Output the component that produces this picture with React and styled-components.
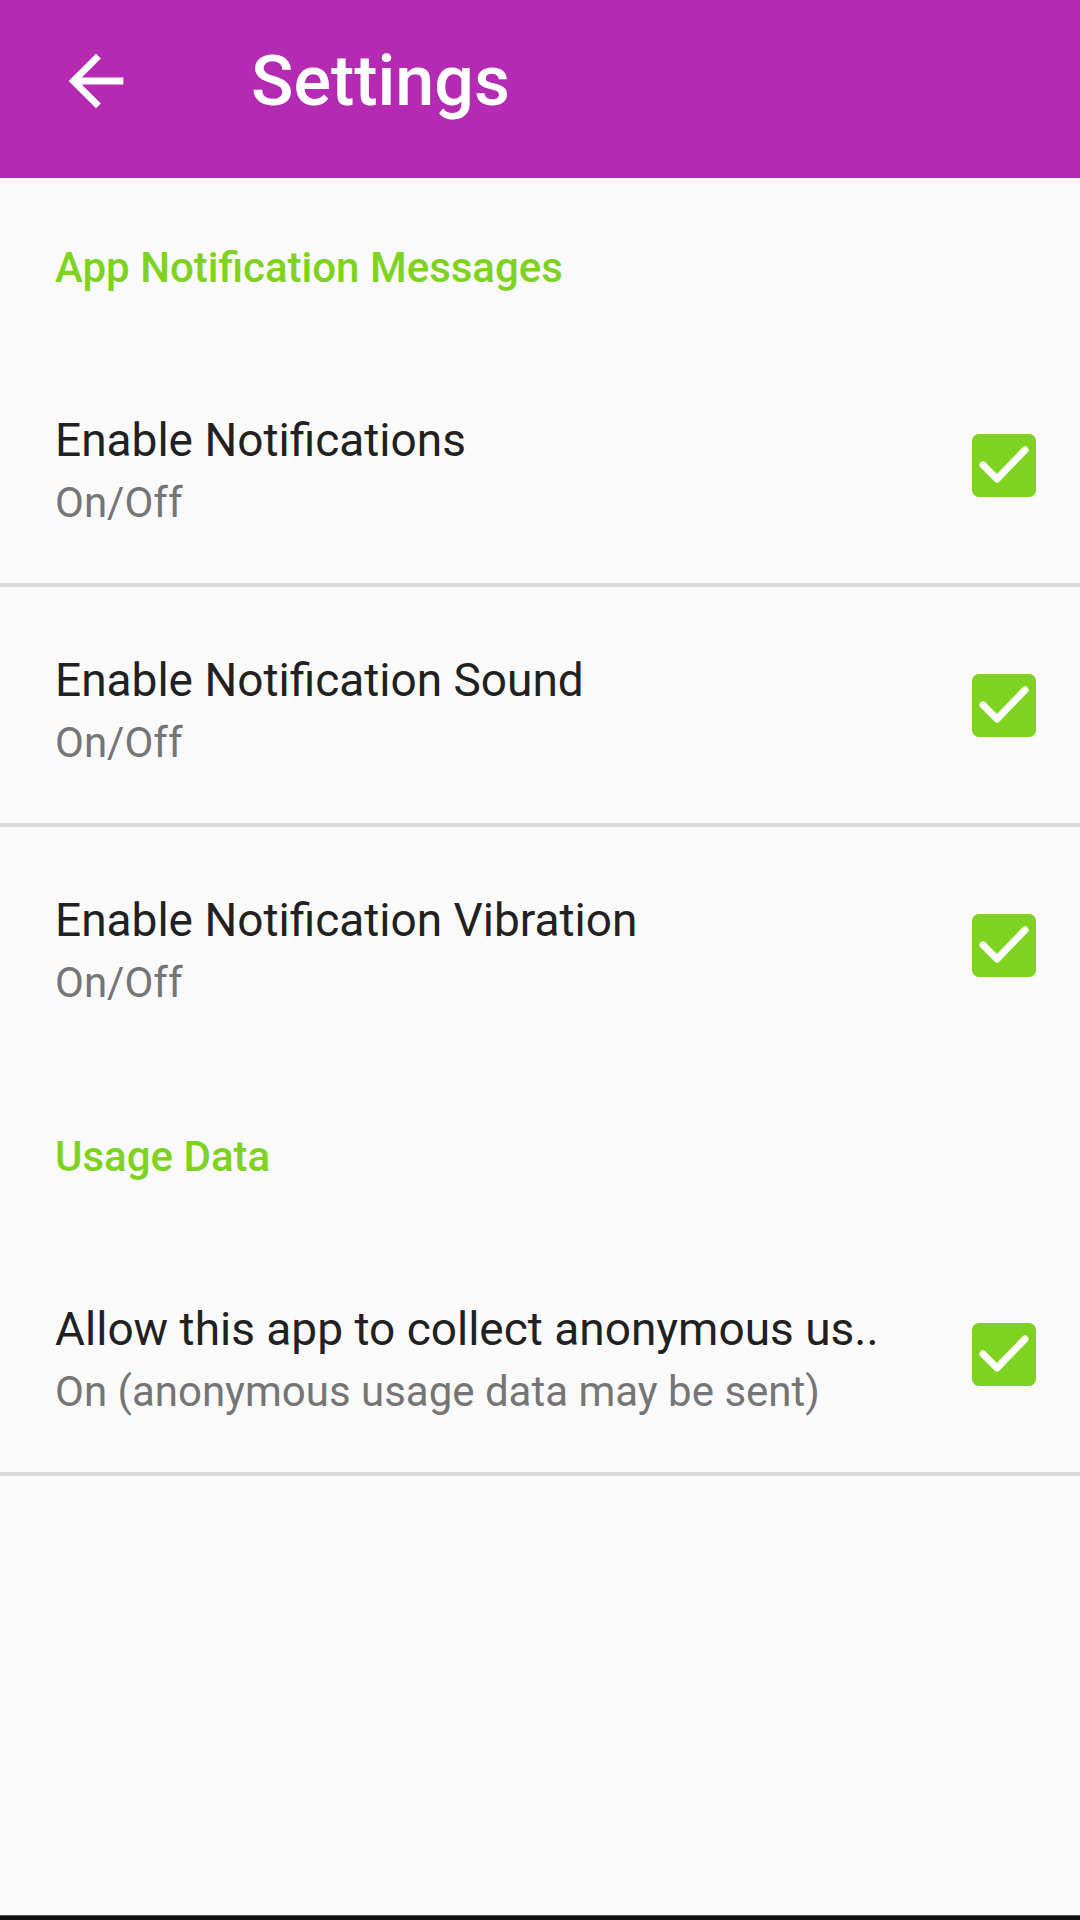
import styled, { createGlobalStyle } from "styled-components";

const GlobalStyle = createGlobalStyle`
  html, body {
    margin: 0;
    padding: 0;
    background: #fafafa;
  }
  body {
    font-family: Roboto, "Noto Sans", "Liberation Sans", sans-serif;
  }
`;

const Screen = styled.div`
  width: 1080px;
  height: 1920px;
  display: flex;
  flex-direction: column;
  background: #fafafa;
  overflow: hidden;
`;

const Toolbar = styled.header`
  height: 178px;
  box-sizing: border-box;
  padding: 0 0 16px 55px;
  display: flex;
  align-items: center;
  background: #b52ab2;
  flex-shrink: 0;
`;

const BackButton = styled.button`
  all: unset;
  width: 82px;
  height: 82px;
  display: flex;
  align-items: center;
  justify-content: center;
  cursor: pointer;
`;

const Title = styled.h1`
  margin: 0 0 0 114px;
  font-size: 70px;
  font-weight: 500;
  color: #ffffff;
  line-height: 82px;
`;

const Category = styled.div`
  height: 169px;
  box-sizing: border-box;
  padding: 65px 0 0 55px;
  font-size: 42px;
  font-weight: 500;
  line-height: 50px;
  color: #7ed321;
  flex-shrink: 0;
`;

const Row = styled.div`
  height: 240px;
  box-sizing: border-box;
  display: flex;
  align-items: center;
  padding: 0 44px 0 55px;
  border-bottom: 4px solid ${(p) => (p.$divider ? "#dadada" : "transparent")};
  flex-shrink: 0;
`;

const TextBlock = styled.div`
  flex: 1;
  min-width: 0;
  padding-top: 9px;
  display: flex;
  flex-direction: column;
`;

const RowTitle = styled.div`
  font-size: 46px;
  line-height: 56px;
  color: #212121;
  white-space: nowrap;
`;

const RowSummary = styled.div`
  margin-top: 10px;
  font-size: 42px;
  line-height: 50px;
  color: #757575;
  white-space: nowrap;
`;

const Box = styled.div`
  width: 64px;
  height: 63px;
  border-radius: 7px;
  background: #7ed321;
  display: flex;
  align-items: center;
  justify-content: center;
  flex-shrink: 0;
  margin-left: 40px;
`;

const Spacer = styled.div`
  flex: 1;
`;

const NavBar = styled.div`
  height: 4px;
  background: #111;
  border-top: 1px solid #555;
  flex-shrink: 0;
`;

const Check = () => (
  <Box>
    <svg width="64" height="63" viewBox="0 0 64 63">
      <polyline
        points="11,31 25,45 53,16"
        fill="none"
        stroke="#fff"
        strokeWidth="7"
        strokeLinecap="round"
        strokeLinejoin="round"
      />
    </svg>
  </Box>
);

const prefs = [
  { title: "Enable Notifications", summary: "On/Off", divider: true },
  { title: "Enable Notification Sound", summary: "On/Off", divider: true },
  { title: "Enable Notification Vibration", summary: "On/Off", divider: false },
];

const Pref = ({ title, summary, divider }) => (
  <Row $divider={divider}>
    <TextBlock>
      <RowTitle>{title}</RowTitle>
      <RowSummary>{summary}</RowSummary>
    </TextBlock>
    <Check />
  </Row>
);

export default function App() {
  return (
    <Screen>
      <GlobalStyle />
      <Toolbar>
        <BackButton aria-label="Back">
          <svg width="82" height="82" viewBox="0 0 24 24">
            <path
              fill="#fff"
              d="M20 11H7.83l5.59-5.59L12 4l-8 8 8 8 1.41-1.41L7.83 13H20v-2z"
            />
          </svg>
        </BackButton>
        <Title>Settings</Title>
      </Toolbar>

      <Category>App Notification Messages</Category>
      {prefs.map((p) => (
        <Pref key={p.title} {...p} />
      ))}

      <Category>Usage Data</Category>
      <Pref
        title="Allow this app to collect anonymous us.."
        summary="On (anonymous usage data may be sent)"
        divider
      />

      <Spacer />
      <NavBar />
    </Screen>
  );
}
